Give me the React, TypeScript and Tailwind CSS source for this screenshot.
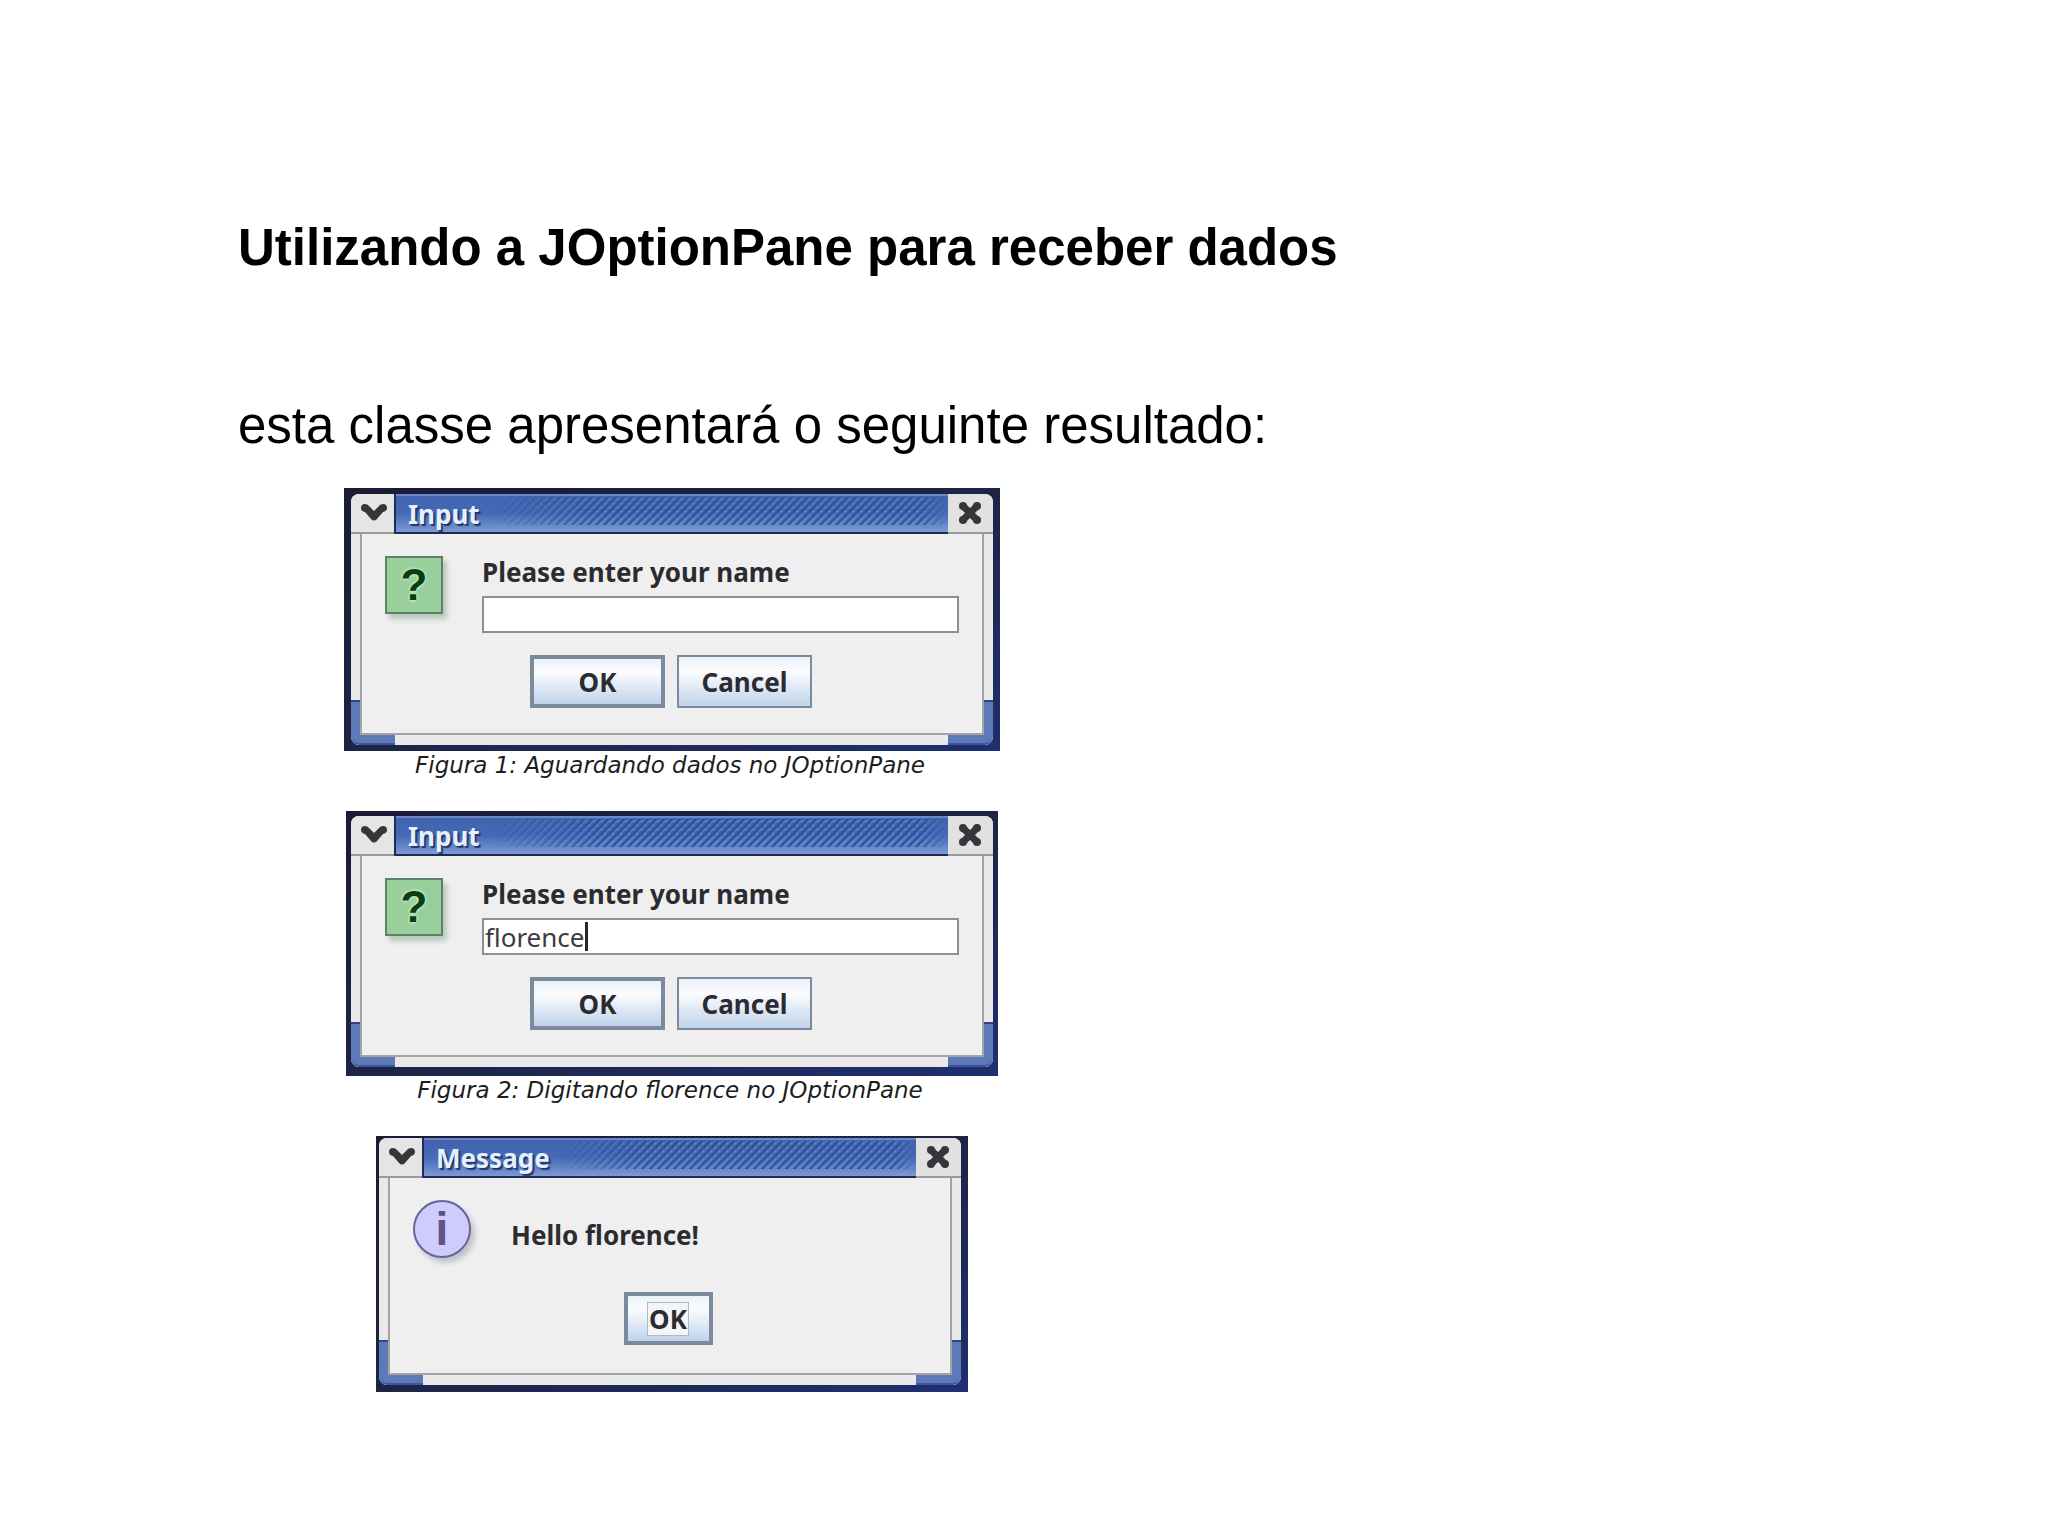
import { useState } from 'react';
import type { ReactNode } from 'react';
import { clsx } from 'clsx';

interface DialogWindowProps {
  title: string;
  frameClassName: string;
  heightClassName: string;
  children: ReactNode;
}

function MenuGlyph() {
  return (
    <svg viewBox="0 0 28 20" className="h-5 w-7" aria-hidden="true">
      <path
        d="M1 5 Q1 1 5 1 Q8 1 10 4 L14 8 L18 4 Q20 1 23 1 Q27 1 27 5 Q27 8 23 9 L17 16 Q14 19 11 16 L5 9 Q1 8 1 5 Z"
        fill="#35353a"
      />
    </svg>
  );
}

function CloseGlyph() {
  return (
    <svg viewBox="0 0 24 24" className="h-6 w-6" aria-hidden="true">
      <path d="M5 5 L19 19 M19 5 L5 19" fill="none" stroke="#35353a" strokeWidth="7" />
      <g fill="#35353a">
        <circle cx="5" cy="5" r="4" />
        <circle cx="19" cy="5" r="4" />
        <circle cx="5" cy="19" r="4" />
        <circle cx="19" cy="19" r="4" />
        <rect x="7" y="7" width="10" height="10" />
      </g>
    </svg>
  );
}

// woven texture on the right part of the title bar
function TitleTexture({ id }: { id: string }) {
  return (
    <svg
      className="h-8 min-w-0 flex-1 [mask-image:linear-gradient(to_right,transparent,black_25%,black_94%,transparent)]"
      aria-hidden="true"
    >
      <defs>
        <pattern id={id} width="8" height="8" patternUnits="userSpaceOnUse">
          <path d="M-2 10 L10 -2" stroke="#2f4f97" strokeWidth="2" />
          <path d="M-2 2 L2 -2 M6 10 L10 6" stroke="#2f4f97" strokeWidth="2" />
          <path d="M-2 6 L6 -2 M2 10 L10 2" stroke="#5f86c9" strokeWidth="2" strokeDasharray="2 2" />
        </pattern>
      </defs>
      <rect width="100%" height="28" fill={`url(#${id})`} />
    </svg>
  );
}

function DialogWindow({
  title,
  frameClassName,
  heightClassName,
  textureId,
  children,
}: DialogWindowProps & { textureId: string }) {
  return (
    <section
      aria-label={title}
      className={clsx(
        'max-w-full bg-linear-to-br from-[#191c33] via-[#1d2445] to-[#1f2f70]',
        frameClassName
      )}
    >
      <div
        className={clsx(
          'relative flex flex-col overflow-hidden rounded-lg bg-[#e9e9ea]',
          heightClassName
        )}
      >
        {/* resize corners, the body covers their inner part */}
        <div className="absolute bottom-0 left-0 h-[45px] w-11 rounded-bl-lg border-t-2 border-b-2 border-t-[#33477f] border-b-[#3a559c] bg-[#5d79b8]" />
        <div className="absolute right-0 bottom-0 h-[45px] w-[45px] rounded-br-lg border-t-2 border-b-2 border-t-[#33477f] border-b-[#3a559c] bg-[#5d79b8]" />

        <header className="flex h-10 shrink-0">
          <button
            type="button"
            aria-label="Menu"
            className="flex w-[43px] items-center justify-center border-b-2 border-[#9a9a9c] bg-[#e6e5e6] pl-0.5"
          >
            <MenuGlyph />
          </button>
          <div className="flex min-w-0 flex-1 items-center gap-2 border-b-2 border-l-2 border-[#1e2c52] bg-linear-to-b from-[#4263ae] via-[#4469b6] to-[#7d99d2] pl-3 shadow-[inset_0_2px_0_#6d88c4]">
            <h2 className="pt-0.5 text-[26px] leading-8 font-bold text-[#e4f0fc] [text-shadow:2px_2px_1px_#22376f]">
              {title}
            </h2>
            <TitleTexture id={textureId} />
          </div>
          <button
            type="button"
            aria-label="Close"
            className="flex w-[45px] items-center justify-center border-b-2 border-[#9a9a9c] bg-[#e1e1e2] pr-0.5"
          >
            <CloseGlyph />
          </button>
        </header>

        <div className="relative mx-[9px] mb-[10px] flex-1 border-x-2 border-b-2 border-[#a3a3a6] bg-[#efeff0] px-[23px] pt-[22px]">
          {children}
        </div>
      </div>
    </section>
  );
}

interface DialogButtonProps {
  label: string;
  isDefault?: boolean;
  isFocused?: boolean;
}

function DialogButton({ label, isDefault = false, isFocused = false }: DialogButtonProps) {
  return (
    <button
      type="button"
      className={clsx(
        'flex h-[53px] items-center justify-center border-[#7b8a9c] bg-linear-to-b from-[#e9f1f9] via-[#fbfcfe] via-30% to-[#bfd3ea] text-[26px] leading-8 font-bold text-[#2b2b30]',
        isDefault ? 'border-4' : 'border-2',
        isFocused ? 'w-[89px]' : 'w-[135px]'
      )}
    >
      {isFocused ? (
        <span className="border border-[#a9b8cc] bg-[#f3f5f8] px-px">{label}</span>
      ) : (
        label
      )}
    </button>
  );
}

function QuestionIcon() {
  return (
    <div className="flex size-[58px] shrink-0 items-center justify-center border-2 border-[#61806a] bg-[#99cf9b] font-['Liberation_Sans',sans-serif] text-[44px] leading-none font-bold text-[#0b3d14] shadow-[4px_5px_5px_#b9c9ba] [text-shadow:0_0_3px_#d3f5d3,0_0_3px_#d3f5d3]">
      ?
    </div>
  );
}

function InfoIcon() {
  return (
    <div className="flex size-[58px] shrink-0 items-center justify-center rounded-full border-2 border-[#66659a] bg-[#cfcbfb] font-['Liberation_Sans',sans-serif] text-[46px] leading-none font-bold text-[#5c5386] shadow-[4px_5px_5px_#c3c3cf]">
      i
    </div>
  );
}

interface InputDialogProps {
  id: string;
  initialValue?: string;
  frameClassName: string;
}

function InputDialog({ id, initialValue = '', frameClassName }: InputDialogProps) {
  const [name, setName] = useState(initialValue);

  return (
    <DialogWindow
      title="Input"
      textureId={`${id}-texture`}
      frameClassName={frameClassName}
      heightClassName="h-[251px]"
    >
      <div className="flex gap-[39px]">
        <QuestionIcon />
        <div className="flex min-w-0 flex-1 flex-col gap-2">
          <label htmlFor={id} className="text-[26px] leading-8 font-bold text-[#2b2b30]">
            Please enter your name
          </label>
          <div className="relative flex">
            <input
              id={id}
              type="text"
              value={name}
              onChange={(e) => setName(e.target.value)}
              className="h-[37px] w-full border-2 border-[#8b8f98] bg-white px-px text-[26px] leading-8 text-[#3b3b40] outline-none"
            />
            {initialValue !== '' && name === initialValue && (
              <span className="absolute top-1 left-[103px] h-[29px] w-[3px] bg-[#26262b]" />
            )}
          </div>
        </div>
      </div>
      <div className="mt-[22px] flex justify-center gap-3 pr-0.5">
        <DialogButton label="OK" isDefault />
        <DialogButton label="Cancel" />
      </div>
    </DialogWindow>
  );
}

function MessageDialog() {
  return (
    <DialogWindow
      title="Message"
      textureId="message-texture"
      frameClassName="w-[592px] pt-0.5 pr-[7px] pb-[7px] pl-[3px]"
      heightClassName="h-[247px]"
    >
      <div className="flex items-center gap-10">
        <InfoIcon />
        <p className="pt-3 text-[26px] leading-8 font-bold text-[#2b2b30]">Hello florence!</p>
      </div>
      <div className="mt-[34px] flex justify-center pr-1">
        <DialogButton label="OK" isDefault isFocused />
      </div>
    </DialogWindow>
  );
}

function Caption({ children }: { children: ReactNode }) {
  return (
    <figcaption className="mb-8 pr-1 text-center font-['DejaVu_Sans',sans-serif] text-[23px] leading-7 text-[#1c1c1c] italic">
      {children}
    </figcaption>
  );
}

export default function App() {
  return (
    <main className="min-h-screen bg-white pt-[218px] pr-10 pb-36 pl-[238px] text-black">
      <h1 className="font-['Liberation_Sans',sans-serif] text-[51px] leading-[60px] font-bold">
        Utilizando a JOptionPane para receber dados
      </h1>
      <p className="mt-[118px] font-['Liberation_Sans',sans-serif] text-[51px] leading-[60px]">
        esta classe apresentará o seguinte resultado:
      </p>

      <div className="mt-8 ml-[106px] flex w-[656px] max-w-full flex-col items-center font-['Noto_Sans',sans-serif]">
        <figure className="flex w-full flex-col items-center">
          <InputDialog id="name-empty" frameClassName="w-[656px] px-[7px] py-1.5" />
          <Caption>Figura 1: Aguardando dados no JOptionPane</Caption>
        </figure>
        <figure className="flex w-full flex-col items-center">
          <InputDialog
            id="name-typed"
            initialValue="florence"
            frameClassName="w-[652px] px-[5px] pt-[5px] pb-[9px]"
          />
          <Caption>Figura 2: Digitando florence no JOptionPane</Caption>
        </figure>
        <MessageDialog />
      </div>
    </main>
  );
}
